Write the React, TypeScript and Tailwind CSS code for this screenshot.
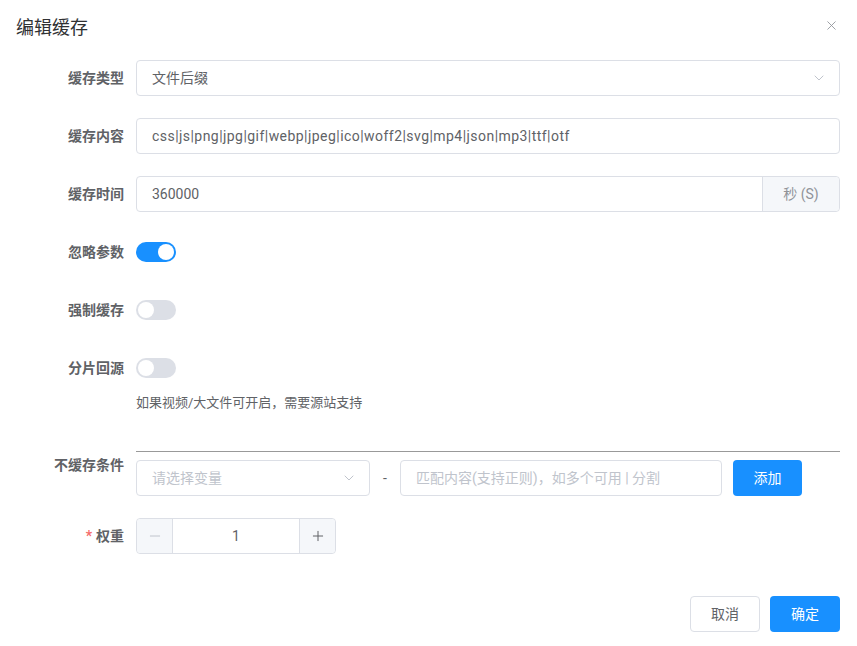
import { ChevronDown, X, Minus, Plus } from "lucide-react";

const FONT = { fontFamily: 'Roboto, "Noto Sans CJK SC", "Liberation Sans", sans-serif' };

function Label({ children, required, top }: { children: React.ReactNode; required?: boolean; top?: boolean }) {
  return (
    <div
      className={`w-[136px] shrink-0 pr-3 text-right text-sm font-bold text-[#606266] ${top ? "pt-[4px] leading-[20px]" : "leading-[36px]"}`}
    >
      {required && <span className="mr-1 text-[#f56c6c]">*</span>}
      {children}
    </div>
  );
}

function Toggle({ on }: { on?: boolean }) {
  return (
    <div className={`relative h-5 w-10 rounded-full ${on ? "bg-[#1890ff]" : "bg-[#dcdfe6]"}`}>
      <span className={`absolute top-[2px] h-4 w-4 rounded-full bg-white ${on ? "left-[22px]" : "left-[2px]"}`} />
    </div>
  );
}

export default function App() {
  return (
    <div className="min-h-[646px] w-full bg-white" style={FONT}>
      {/* 头部 */}
      <div className="flex items-center justify-between pl-4 pr-[18px] pt-[16px] pb-[14px]">
        <span className="text-[18px] leading-[24px] text-[#303133]">编辑缓存</span>
        <X className="-mt-[6px] h-[15px] w-[15px] text-[#909399]" strokeWidth={1.4} />
      </div>

      {/* 表单 */}
      <div className="pr-[17px] pt-[6px]">
        <div className="mb-[22px] flex">
          <Label>缓存类型</Label>
          <div className="flex h-9 flex-1 items-center justify-between rounded border border-[#dcdfe6] pl-[15px] pr-3 text-sm text-[#606266]">
            <span>文件后缀</span>
            <ChevronDown className="h-4 w-4 text-[#c0c4cc]" strokeWidth={1.5} />
          </div>
        </div>

        <div className="mb-[22px] flex">
          <Label>缓存内容</Label>
          <div className="flex h-9 flex-1 items-center rounded border border-[#dcdfe6] px-[15px] text-sm tracking-[0.45px] text-[#606266]">
            css|js|png|jpg|gif|webp|jpeg|ico|woff2|svg|mp4|json|mp3|ttf|otf
          </div>
        </div>

        <div className="mb-[22px] flex">
          <Label>缓存时间</Label>
          <div className="flex h-9 flex-1 rounded border border-[#dcdfe6] text-sm">
            <div className="flex flex-1 items-center px-[15px] text-[#606266]">360000</div>
            <div className="flex w-[77px] items-center justify-center rounded-r border-l border-[#dcdfe6] bg-[#f5f7fa] text-[#909399]">
              秒 (S)
            </div>
          </div>
        </div>

        <div className="mb-[22px] flex">
          <Label>忽略参数</Label>
          <div className="flex h-9 items-center">
            <Toggle on />
          </div>
        </div>

        <div className="mb-[22px] flex">
          <Label>强制缓存</Label>
          <div className="flex h-9 items-center">
            <Toggle />
          </div>
        </div>

        <div className="mb-[22px] flex">
          <Label>分片回源</Label>
          <div className="flex flex-col">
            <div className="flex h-9 items-center">
              <Toggle />
            </div>
            <div className="mt-[8px] text-[13px] leading-[18px] text-[#606266]">如果视频/大文件可开启，需要源站支持</div>
          </div>
        </div>

        <div className="mt-[39px] mb-[22px] flex">
          <Label top>不缓存条件</Label>
          <div className="flex-1">
            <div className="border-t border-[#999999]" />
            <div className="mt-[8px] flex items-center">
              <div className="flex h-9 w-[234px] items-center justify-between rounded border border-[#dcdfe6] pl-[15px] pr-3 text-sm text-[#c0c4cc]">
                <span>请选择变量</span>
                <ChevronDown className="h-4 w-4 text-[#c0c4cc]" strokeWidth={1.5} />
              </div>
              <span className="w-[30px] text-center text-sm text-[#606266]">-</span>
              <div className="flex h-9 w-[322px] items-center rounded border border-[#dcdfe6] px-[15px] text-sm text-[#c0c4cc]">
                匹配内容(支持正则)，如多个可用 | 分割
              </div>
              <button className="ml-[11px] h-9 w-[69px] rounded bg-[#1890ff] text-sm text-white">添加</button>
            </div>
          </div>
        </div>

        <div className="flex">
          <Label required>权重</Label>
          <div className="flex h-9 w-[200px] rounded border border-[#dcdfe6] text-sm">
            <div className="flex w-9 items-center justify-center rounded-l border-r border-[#dcdfe6] bg-[#f5f7fa] text-[#606266]">
              <Minus className="h-4 w-4 text-[#c0c4cc]" strokeWidth={1.5} />
            </div>
            <div className="flex flex-1 items-center justify-center text-[#606266]">1</div>
            <div className="flex w-9 items-center justify-center rounded-r border-l border-[#dcdfe6] bg-[#f5f7fa]">
              <Plus className="h-4 w-4 text-[#606266]" strokeWidth={1.5} />
            </div>
          </div>
        </div>
      </div>

      {/* 底部 */}
      <div className="flex justify-end gap-[10px] pr-[17px] pt-[42px]">
        <button className="h-9 w-[70px] rounded border border-[#dcdfe6] bg-white text-sm text-[#606266]">取消</button>
        <button className="h-9 w-[70px] rounded bg-[#1890ff] text-sm text-white">确定</button>
      </div>
    </div>
  );
}
